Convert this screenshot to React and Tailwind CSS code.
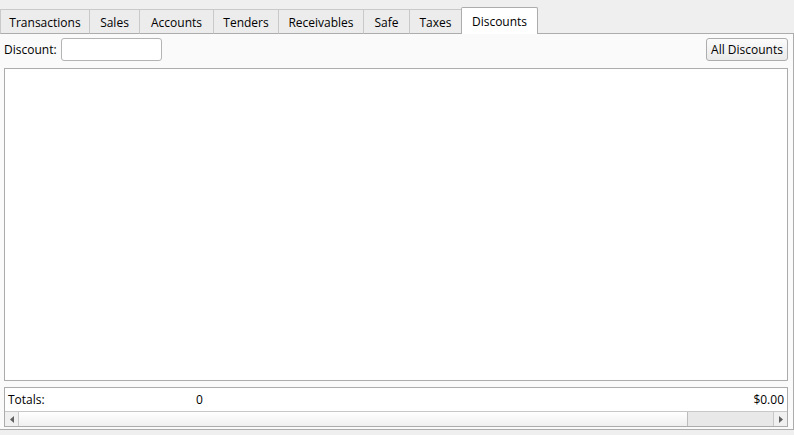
import { useState } from "react";

// widths include the left edge line of each tab
const TABS = [
  { label: "Transactions", w: 89 },
  { label: "Sales", w: 50 },
  { label: "Accounts", w: 74 },
  { label: "Tenders", w: 65 },
  { label: "Receivables", w: 85 },
  { label: "Safe", w: 46 },
  { label: "Taxes", w: 52 },
  { label: "Discounts", w: 77 },
];

const App = () => {
  const [active, setActive] = useState("Discounts");
  const [discount, setDiscount] = useState("");

  return (
    <div className="w-[794px] h-[435px] bg-[#efefef] text-[12px] text-black font-['Open_Sans','Noto_Sans',sans-serif] overflow-hidden select-none">
      {/* tab strip */}
      <div className="flex items-end h-[34px] pt-[7px]">
        {TABS.map((t) => {
          const on = t.label === active;
          return (
            <div
              key={t.label}
              onClick={() => setActive(t.label)}
              style={{ width: t.w }}
              className={
                on
                  ? "relative z-10 h-[27px] bg-white border border-b-0 border-[#acacac] rounded-t-[2px] flex items-center justify-center pt-[1px] cursor-default"
                  : "h-[25px] bg-[#ececec] border-l border-t border-b border-[#c9c9c9] border-b-[#acacac] flex items-center justify-center pt-[3px] cursor-default"
              }
            >
              {t.label}
            </div>
          );
        })}
      </div>

      {/* tab page */}
      <div className="-mt-px h-[397px] bg-[#fafafa] border border-[#acacac] border-l-0 flex flex-col px-[4px] pt-[4px]">
        <div className="flex items-center justify-between h-[23px] shrink-0">
          <div className="flex items-center gap-[4px]">
            <span>Discount:</span>
            <input
              value={discount}
              onChange={(e) => setDiscount(e.target.value)}
              className="w-[101px] h-[23px] bg-white border border-[#b4b4b4] rounded-[3px] px-1 outline-none"
            />
          </div>
          <button className="w-[82px] h-[23px] mr-[1px] bg-gradient-to-b from-[#fbfbfb] to-[#eaeaea] border border-[#adadad] rounded-[3px] text-[12px]">
            All Discounts
          </button>
        </div>

        <div className="mt-[7px] h-[313px] shrink-0 mr-[1px] bg-white border border-[#acacac]" />

        <div className="mt-[6px] mr-[1px] h-[40px] shrink-0 bg-white border border-[#acacac] flex flex-col">
          <div className="h-[23px] flex items-center px-[3px]">
            <span className="w-[188px]">Totals:</span>
            <span>0</span>
            <span className="ml-auto">$0.00</span>
          </div>
          {/* horizontal scrollbar */}
          <div className="h-[15px] flex bg-[#e8e8e8] border-t border-[#c8c8c8]">
            <div className="w-[14px] flex items-center justify-center bg-[#f0f0f0] border-r border-[#c8c8c8]">
              <svg width="4" height="7" viewBox="0 0 4 7">
                <path d="M4 0L0 3.5L4 7Z" fill="#606060" />
              </svg>
            </div>
            <div className="w-[669px] bg-gradient-to-b from-[#ffffff] to-[#f0f0f0] border-r border-[#bcbcbc]" />
            <div className="flex-1" />
            <div className="w-[14px] flex items-center justify-center bg-[#f0f0f0] border-l border-[#c8c8c8]">
              <svg width="4" height="7" viewBox="0 0 4 7">
                <path d="M0 0L4 3.5L0 7Z" fill="#606060" />
              </svg>
            </div>
          </div>
        </div>
      </div>
    </div>
  );
};

export default App;
